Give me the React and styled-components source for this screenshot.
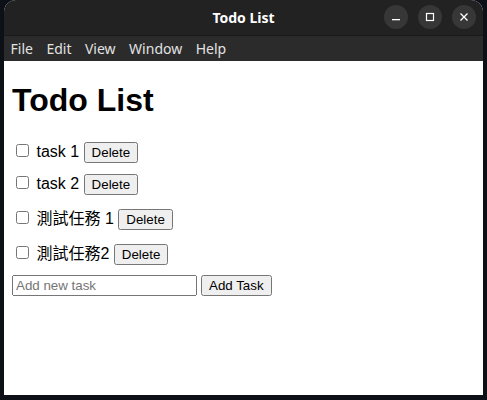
import React, { useState } from "react";
import styled, { createGlobalStyle } from "styled-components";

const GlobalStyle = createGlobalStyle`
  html, body {
    margin: 0;
    padding: 0;
    background: #0d1117;
    height: 400px;
    overflow: hidden;
  }
`;

const Desktop = styled.div`
  width: 487px;
  height: 400px;
  padding: 0 4px 5px 4px;
  box-sizing: border-box;
`;

const Window = styled.div`
  height: 395px;
  display: flex;
  flex-direction: column;
  border-radius: 12px 12px 0 0;
  overflow: hidden;
  background: #ffffff;
`;

const TitleBar = styled.div`
  height: 35px;
  flex: none;
  background: #222222;
  border-bottom: 1px solid #1a1a1a;
  display: flex;
  align-items: center;
  justify-content: center;
  position: relative;
  font-family: "Noto Sans", "DejaVu Sans", sans-serif;
  font-weight: 700;
  font-size: 14px;
  color: #ffffff;
`;

const Controls = styled.div`
  position: absolute;
  right: 7px;
  top: 5px;
  display: flex;
  gap: 10px;
`;

const CtrlButton = styled.div`
  width: 24px;
  height: 24px;
  border-radius: 50%;
  background: #373737;
  display: flex;
  align-items: center;
  justify-content: center;
`;

const MenuBar = styled.div`
  height: 25px;
  flex: none;
  background: #2b2b2b;
  display: flex;
  align-items: center;
  padding-left: 0;
  font-family: "Noto Sans", "DejaVu Sans", sans-serif;
  font-size: 14px;
  color: #e2e2e2;
`;

const MenuItem = styled.span`
  padding: 0 7px 0 6.5px;
`;

const Content = styled.div`
  flex: 1;
  padding: 0 8px;
  font-family: "Liberation Sans", "Noto Sans CJK TC", sans-serif;
  font-size: 16px;
  color: #000000;
`;

const Heading = styled.h1`
  font-size: 32px;
  font-weight: 700;
  margin: 21px 0 22px;
`;

const List = styled.ul`
  list-style: none;
  margin: 0;
  padding: 0;
`;

const Item = styled.li`
  margin-bottom: 10px;
`;

const Check = styled.input`
  margin: 3px 3px 3px 4px;
`;

const SmallButton = styled.button`
  font-family: "Liberation Sans", Arial, sans-serif;
  font-size: 13.333px;
`;

const TaskInput = styled.input`
  font-family: "Liberation Sans", Arial, sans-serif;
  font-size: 13.333px;
  width: 177px;
  &::placeholder {
    color: #757575;
  }
`;

const Form = styled.div`
  display: flex;
  align-items: center;
  gap: 4px;
`;

const App = () => {
  const [tasks] = useState(["task 1", "task 2", "測試任務 1", "測試任務2"]);
  return (
    <>
      <GlobalStyle />
      <Desktop>
        <Window>
          <TitleBar>
            Todo List
            <Controls>
              <CtrlButton>
                <svg width="10" height="10" viewBox="0 0 10 10">
                  <rect x="1" y="7" width="8" height="1.3" fill="#ffffff" />
                </svg>
              </CtrlButton>
              <CtrlButton>
                <svg width="10" height="10" viewBox="0 0 10 10">
                  <rect x="1.5" y="1.5" width="7" height="7" fill="none" stroke="#ffffff" strokeWidth="1.2" />
                </svg>
              </CtrlButton>
              <CtrlButton>
                <svg width="10" height="10" viewBox="0 0 10 10">
                  <path d="M1.5 1.5 L8.5 8.5 M8.5 1.5 L1.5 8.5" stroke="#ffffff" strokeWidth="1.3" />
                </svg>
              </CtrlButton>
            </Controls>
          </TitleBar>
          <MenuBar>
            <MenuItem>File</MenuItem>
            <MenuItem>Edit</MenuItem>
            <MenuItem>View</MenuItem>
            <MenuItem>Window</MenuItem>
            <MenuItem>Help</MenuItem>
          </MenuBar>
          <Content>
            <Heading>Todo List</Heading>
            <List>
              {tasks.map((task) => (
                <Item key={task}>
                  <Check type="checkbox" /> <span>{task}</span>{" "}
                  <SmallButton>Delete</SmallButton>
                </Item>
              ))}
            </List>
            <Form>
              <TaskInput type="text" placeholder="Add new task" />
              <SmallButton>Add Task</SmallButton>
            </Form>
          </Content>
        </Window>
      </Desktop>
    </>
  );
};

export default App;
